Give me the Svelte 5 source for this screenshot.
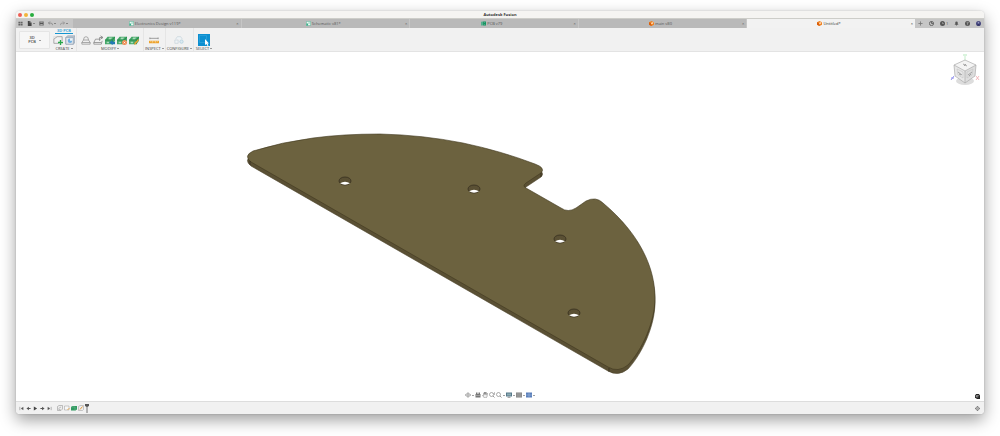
<script lang="ts">
	interface Tab {
		title: string;
		icon: string;
	}
	interface Tool {
		icon: string;
		label: string;
		menu?: boolean;
		count?: number;
	}
	interface Group {
		name: string;
		tools: Tool[];
	}

	const tabs: Tab[] = [
		{ title: 'Electronics Design v119*', icon: 'design' },
		{ title: 'Schematic v81*', icon: 'schematic' },
		{ title: 'PCB v79', icon: 'board' },
		{ title: 'main v80', icon: 'part' },
		{ title: 'Untitled*', icon: 'part' }
	];
	let active = $state(4);

	const fileTools: Tool[] = [
		{ icon: 'panel', label: 'Show data panel' },
		{ icon: 'file', label: 'File', menu: true },
		{ icon: 'save', label: 'Save' },
		{ icon: 'undo', label: 'Undo', menu: true },
		{ icon: 'redo', label: 'Redo', menu: true }
	];

	const accountTools: Tool[] = [
		{ icon: 'plus', label: 'New design' },
		{ icon: 'refresh', label: 'Extensions' },
		{ icon: 'clock', label: 'Job status', count: 1 },
		{ icon: 'bell', label: 'Notifications' },
		{ icon: 'help', label: 'Help' },
		{ icon: 'user', label: 'My profile' }
	];

	const groups: Group[] = [
		{
			name: 'CREATE',
			tools: [
				{ icon: 'sketch', label: 'Create sketch' },
				{ icon: 'derive', label: 'Board from sketch' }
			]
		},
		{
			name: 'MODIFY',
			tools: [
				{ icon: 'press', label: 'Press pull' },
				{ icon: 'move', label: 'Move' },
				{ icon: 'pcbPush', label: 'Push to PCB' },
				{ icon: 'pcbOff', label: 'Detach component' },
				{ icon: 'pcbEdit', label: 'Edit component' }
			]
		},
		{ name: 'INSPECT', tools: [{ icon: 'measure', label: 'Measure' }] },
		{ name: 'CONFIGURE', tools: [{ icon: 'configure', label: 'Configure' }] },
		{ name: 'SELECT', tools: [{ icon: 'select', label: 'Select' }] }
	];

	const navTools: Tool[] = [
		{ icon: 'orbit', label: 'Orbit', menu: true },
		{ icon: 'look', label: 'Look at' },
		{ icon: 'pan', label: 'Pan' },
		{ icon: 'zoom', label: 'Zoom' },
		{ icon: 'fit', label: 'Fit', menu: true },
		{ icon: 'display', label: 'Display settings', menu: true },
		{ icon: 'grid', label: 'Grid and snaps', menu: true },
		{ icon: 'views', label: 'Viewports', menu: true }
	];

	const playback: Tool[] = [
		{ icon: 'first', label: 'Go to beginning' },
		{ icon: 'prev', label: 'Step back' },
		{ icon: 'play', label: 'Play' },
		{ icon: 'next', label: 'Step forward' },
		{ icon: 'last', label: 'Go to end' }
	];

	const features: Tool[] = [
		{ icon: 'link', label: 'Link' },
		{ icon: 'sketchStep', label: 'Sketch' },
		{ icon: 'boardStep', label: 'Board' },
		{ icon: 'editStep', label: 'Edit' }
	];

	// the top face of the board; the underside is the same outline, lowered
	const outline =
		'M253 151 Q282 142 313 138 Q343 134 380 134 Q423 135 463 143 Q501 151 535 164 Q546 168 541 173 L526 183 Q522 186 526 188 L561 208 Q568 213 576 208 L586 201 Q596 196 603 203 C640 234 655 268 655 298 C655 322 642 350 628 365 Q618 373 608 367 L251 162 Q243 156 253 151 Z';
	const holes = [
		[345, 181],
		[474, 189],
		[560, 239],
		[574, 313]
	];
</script>

{#snippet glyph(name: string)}
	<svg class="glyph" viewBox="0 0 12 12" aria-hidden="true">
		{#if name === 'design' || name === 'schematic'}
			<path d="M1 1h10v10H1z" fill="#eefaf5" stroke="#36ad88" />
			<path d="M1 6h4v5H1z" fill="#36ad88" />
			<path d="M5 3h4v3H5" fill="none" stroke="#6cc7aa" />
		{:else if name === 'board'}
			<path d="M0 2l5-1v10H0z" fill="#54af8d" />
			<path d="M5 1h7v10H5z" fill="#149260" />
			<path d="M7 3h3v2H7zM7 7h3v2H7z" fill="#53b58f" />
		{:else if name === 'part'}
			<path d="M6 0l6 3v6l-6 3-6-3V3z" fill="#f08221" />
			<path d="M0 3l6 3v6l-6-3z" fill="#d95e0b" />
			<path d="M5 4l6-2-2 5-4 1z" fill="#ffd0a3" />
		{:else if name === 'panel'}
			<path d="M1 2h4v4H1zM6 2h5v4H6zM1 7h4v4H1zM6 7h5v4H6z" fill="#626262" />
		{:else if name === 'file'}
			<path d="M2 0h5l4 4v8H2z" fill="#444" />
			<path d="M7 0v4h4" fill="none" stroke="#bbb" />
		{:else if name === 'save'}
			<path d="M1 1h10v10H1z" fill="#555" />
			<path d="M3 1h6v3H3zM3 7h6v4H3z" fill="#aaa" />
		{:else if name === 'undo'}
			<path d="M5 1L1 5l4 3M1 5h6q4 0 4 5" fill="none" stroke="#777" stroke-width="1.5" />
		{:else if name === 'redo'}
			<path d="M7 1l4 4-4 3M11 5H5q-4 0-4 5" fill="none" stroke="#888" stroke-width="1.5" />
		{:else if name === 'plus'}
			<path d="M6 1v10M1 6h10" stroke="#777" stroke-width="2" />
		{:else if name === 'refresh'}
			<circle cx="6" cy="6" r="5" fill="none" stroke="#555" stroke-width="2" />
			<path d="M6 1v5h5" fill="none" stroke="#555" stroke-width="2" />
		{:else if name === 'clock'}
			<circle cx="6" cy="6" r="6" fill="#555" />
			<path d="M6 3v3h3" fill="none" stroke="#bbb" stroke-width="1.5" />
		{:else if name === 'bell'}
			<path d="M1 9l2-2V4q0-3 3-3t3 3v3l2 2zM5 9h2v2H5z" fill="#555" />
		{:else if name === 'help'}
			<circle cx="6" cy="6" r="6" fill="#555" />
			<path d="M4 4q2-2 4 0 0 1-2 2v1M6 8v2" fill="none" stroke="#ddd" stroke-width="1.3" />
		{:else if name === 'user'}
			<circle cx="6" cy="6" r="6" fill="#45467d" />
			<circle cx="6" cy="4" r="2" fill="#9698bd" />
			<path d="M2 11q4-6 8 0" fill="#292959" />
		{:else if name === 'sketch'}
			<path d="M1 10V5l4-3h6v5M1 10h6" fill="none" stroke="#888" stroke-width=".8" />
			<path d="M1 5V2h4" fill="none" stroke="#aaa" stroke-width=".6" stroke-dasharray="1 1" />
			<path d="M9 6v6M6 9h6" stroke="#28a64a" stroke-width="1.6" />
		{:else if name === 'derive'}
			<path d="M1 3l2-2h9v8l-2 2H1z" fill="#bdc8d3" stroke="#899aac" stroke-width=".7" />
			<path d="M1 3h9v8H1z" fill="#e1e7ec" stroke="#899aac" stroke-width=".7" />
			<circle cx="6" cy="7" r="2.7" fill="#6faee0" />
			<path d="M6 7V4a3 3 0 0 1 3 3z" fill="#eaf4fa" />
		{:else if name === 'press'}
			<path d="M3 6L1 9v2h10V9L9 6z" fill="#eee" stroke="#888" stroke-width=".8" />
			<path d="M1 9h10M3 6q0-4 3-4t3 4" fill="none" stroke="#888" stroke-width=".8" />
		{:else if name === 'move'}
			<path d="M3 5L1 9v2h9l1-4M1 9h9M3 5h5" fill="none" stroke="#777" stroke-width=".8" />
			<path d="M8 7V3h3M9 1l3 2-3 2" fill="none" stroke="#666" stroke-width=".8" />
		{:else if name === 'pcbPush' || name === 'pcbOff' || name === 'pcbEdit'}
			<path d="M0 6l3-4h9v5l-3 4H0z" fill="#45a768" />
			<path d="M0 6h9l3-4M9 6v5" fill="none" stroke="#187f43" stroke-width=".8" />
			<path d="M4 5l1-2h4L7 5z" fill="#a9dcb9" />
			<path d="M2 8h3v2H2z" fill="#a9dcb9" />
			{#if name === 'pcbPush'}
				<path d="M5 9l4-3v2h3v3H9v1z" fill="#217bb5" />
			{:else if name === 'pcbOff'}
				<circle cx="9" cy="9" r="3" fill="#ef8e55" />
				<path d="M8 8l2 2M10 8l-2 2" stroke="#fff" stroke-width=".8" />
			{:else}
				<path d="M6 12l1-3 4-4 1 1-4 5z" fill="#eda031" />
			{/if}
		{:else if name === 'measure'}
			<path d="M0 7h12v3H0z" fill="#eda32d" />
			<path d="M2 7v1M4 7v2M6 7v1M8 7v2M10 7v1" stroke="#fff" stroke-width=".6" />
			<path d="M1 4h10M1 3v2M11 3v2" stroke="#777" stroke-width=".8" />
		{:else if name === 'configure'}
			<path d="M2 5l2-3h4l2 3M1 6h4v4H1z" fill="#eef3f6" stroke="#c5d2da" stroke-width=".8" />
			<circle cx="9" cy="8" r="2" fill="#dceaf2" stroke="#b5d2e0" />
		{:else if name === 'select'}
			<path d="M0 0h12v12H0z" fill="#0c8fd0" />
			<path d="M1.500 1.500h7v7h-7z" fill="none" stroke="#3daae0" stroke-width=".5" />
			<path d="M7 5v6l1.500-1 1 2 1-.5-1-2H11z" fill="#fff" />
		{:else if name === 'orbit'}
			<path d="M6 0v12M0 6h12" stroke="#888" stroke-width="1.200" />
			<ellipse cx="6" cy="6" rx="5" ry="3" fill="none" stroke="#888" />
		{:else if name === 'look'}
			<path d="M1 4h10v7H1zM2 1h3v3H2zM7 1h3v3H7z" fill="#777" />
			<path d="M2 7h8" stroke="#ccc" />
		{:else if name === 'pan'}
			<path d="M3 7V3h1V1h1v4-5h2v5-4h2v4l1-2h1l-1 6-2 3H5L1 7z" fill="#eee" stroke="#777" />
		{:else if name === 'zoom' || name === 'fit'}
			<circle cx="5" cy="5" r="4" fill="none" stroke="#777" stroke-width="1.200" />
			<path d="M8 8l3 3" stroke="#777" stroke-width="1.500" />
			{#if name === 'zoom'}<path d="M11 1v5M9 3l2-2" fill="none" stroke="#777" />{/if}
		{:else if name === 'display'}
			<path d="M0 1h12v8H0z" fill="#56788a" />
			<path d="M2 3h8v4H2z" fill="#8cabb2" />
			<path d="M6 9v2M3 11h6" stroke="#666" />
		{:else if name === 'grid'}
			<path d="M0 1h12v10H0z" fill="#808080" />
			<path d="M4 1v10M8 1v10M0 4h12M0 8h12" stroke="#bbb" stroke-width=".8" />
		{:else if name === 'views'}
			<path d="M0 1h12v10H0z" fill="#5a7fba" />
			<path d="M6 1v10M0 6h12" stroke="#a9c0e3" />
		{:else if name === 'first'}
			<path d="M2 2v8M10 3L5 6l5 3z" fill="#555" stroke="#555" />
		{:else if name === 'prev'}
			<path d="M7 2v8L1 6zM7 5h4v2H7z" fill="#555" />
		{:else if name === 'play'}
			<path d="M2 1l8 5-8 5z" fill="#444" />
		{:else if name === 'next'}
			<path d="M5 2v8l6-4zM1 5h4v2H1z" fill="#555" />
		{:else if name === 'last'}
			<path d="M10 2v8M2 3l5 3-5 3z" fill="#555" stroke="#555" />
		{:else if name === 'link'}
			<path d="M1 3l3-2h7v7l-3 3H1z" fill="#eee" stroke="#888" />
			<path d="M3 7l5-3M3 9h4" stroke="#888" />
		{:else if name === 'sketchStep'}
			<path d="M1 2h9v8H1z" fill="#f7f7f7" stroke="#999" />
			<path d="M7 10l4-4" stroke="#e9ad55" stroke-width="2" />
		{:else if name === 'boardStep'}
			<path d="M0 4l3-2h9v7l-3 2H0z" fill="#319a61" />
			<path d="M0 4h8v7" fill="none" stroke="#78bd94" />
		{:else if name === 'editStep'}
			<path d="M1 3l3-2h7v8l-2 2H1z" fill="#eee" stroke="#999" />
			<path d="M4 9l5-6" stroke="#e69c3d" stroke-width="2" />
		{:else if name === 'gear'}
			<circle cx="6" cy="6" r="4" fill="#ddd" stroke="#777" stroke-width="2" />
			<path d="M6 0v3M6 9v3M0 6h3M9 6h3" stroke="#777" stroke-width="2" />
			<circle cx="6" cy="6" r="1" fill="#777" />
		{:else if name === 'assistant'}
			<path d="M3 0h6l3 3v9H5L0 9V3z" fill="#222" />
			<path d="M3 4h6M3 4v3h5" fill="none" stroke="#ddd" stroke-width="1.500" />
		{/if}
	</svg>
{/snippet}

{#snippet toolButton(tool: Tool)}
	<button class="tool" aria-label={tool.label} title={tool.label}>
		{@render glyph(tool.icon)}
		{#if tool.count}<span class="count">{tool.count}</span>{/if}
		{#if tool.menu}<span class="caret"></span>{/if}
	</button>
{/snippet}

<main class="desktop">
	<div class="window">
		<header class="titlebar">
			<div class="lights">
				<button class="close" aria-label="Close window"></button>
				<button class="minimize" aria-label="Minimize window"></button>
				<button class="maximize" aria-label="Maximize window"></button>
			</div>
			<h1>Autodesk Fusion</h1>
		</header>

		<div class="tabstrip">
			<div class="file-tools">
				{#each fileTools as tool (tool.icon)}
					{@render toolButton(tool)}
				{/each}
			</div>
			<div class="tabs">
				{#each tabs as tab, i (tab.title)}
					<div class="tab" class:active={active === i}>
						<button class="tab-title" onclick={() => (active = i)}>
							{@render glyph(tab.icon)}{tab.title}
						</button>
						<button class="tab-close" aria-label="Close {tab.title}">×</button>
					</div>
				{/each}
			</div>
			<div class="account-tools">
				{#each accountTools as tool (tool.icon)}
					{@render toolButton(tool)}
				{/each}
			</div>
		</div>

		<div class="ribbon">
			<button class="workspace">
				<span>3D<br />PCB</span>
				<span class="caret"></span>
			</button>
			{#each groups as group, i (group.name)}
				<section class="group" class:wide={group.tools.length > 2}>
					<div class="mode" class:current={i === 0}>{i === 0 ? '3D PCB' : ''}</div>
					<div class="group-tools">
						{#each group.tools as tool (tool.icon)}
							{@render toolButton(tool)}
						{/each}
					</div>
					<button class="group-name">{group.name}<span class="caret"></span></button>
				</section>
			{/each}
		</div>

		<div class="viewport">
			<svg class="model" viewBox="16 52 968 349" role="img" aria-label="Board model">
				<path
					d={outline}
					transform="translate(0 4)"
					fill="#5a5034"
					stroke="#4a4129"
					stroke-width=".6"
				/>
				<path d={outline} fill="#6c623f" stroke="#40381f" stroke-width=".6" />
				<path d="M250 161v4M609 368v4M541 173v4" stroke="#302a1b" stroke-width=".7" />
				{#each holes as [x, y] (x)}
					<g transform="translate({x} {y})">
						<ellipse rx="6" ry="4" fill="#5a5034" stroke="#302a1b" stroke-width=".7" />
						<path d="M-5 2.300Q0-.8 5 2.300Q0 5 -5 2.300Z" fill="#fff" />
					</g>
				{/each}
			</svg>

			<svg class="viewcube" viewBox="0 0 30 34" role="img" aria-label="View cube">
				<path d="M15 8V2" stroke="#9be0a5" stroke-width=".6" />
				<path d="M13 1h4" stroke="#b5e9bd" />
				<path d="M4 24H1m3-2l-3 4" fill="none" stroke="#8080ea" stroke-width=".8" />
				<path d="M26 22l3 4m0-4l-3 4" stroke="#f0a9ae" stroke-width=".8" />
				<ellipse cx="15" cy="27" rx="9" ry="4" fill="#ddd" />
				<path d="M15 6l11 5-11 6-11-6z" fill="#f4f4f4" />
				<path d="M4 11l11 6v12L5 22z" fill="#e7e7e7" />
				<path d="M26 11l-11 6v12l10-7z" fill="#dedede" />
				<path
					d="M15 6l11 5-1 11-10 7-10-7-1-11zM4 11l11 6 11-6M15 17v12"
					fill="none"
					stroke="#aaa"
					stroke-width=".7"
				/>
				<path d="M7 15l6 3v6l-5-3zM23 15l-6 3v6l5-3z" fill="none" stroke="#c5c5c5" stroke-width=".6" />
				<path
					d="M13 10l4 2M14 12l2-2M8 18l4 3M9 20l2 1M18 21l4-3M19 22l2-2"
					stroke="#888"
					stroke-width=".7"
				/>
			</svg>

			<nav class="navbar" aria-label="Navigation">
				{#each navTools as tool (tool.icon)}
					{@render toolButton(tool)}
				{/each}
			</nav>
			<button class="assistant tool" aria-label="Assistant">{@render glyph('assistant')}</button>
		</div>

		<footer class="timeline">
			<div class="playback">
				{#each playback as tool (tool.icon)}
					{@render toolButton(tool)}
				{/each}
			</div>
			<div class="features">
				{#each features as tool (tool.icon)}
					{@render toolButton(tool)}
				{/each}
				<svg class="marker" viewBox="0 0 4 9" aria-hidden="true">
					<path d="M0 0h4v2L2 3 0 2z" fill="#555" />
					<path d="M2 2v7" stroke="#555" stroke-width=".8" />
				</svg>
			</div>
			<button class="settings tool" aria-label="Timeline settings">{@render glyph('gear')}</button>
		</footer>
	</div>
</main>

<style>
	:global(body) {
		margin: 0;
		background: #fff;
	}
	.desktop {
		box-sizing: border-box;
		min-height: 100vh;
		padding: 11px 16px 22px;
		display: flex;
		font-family: 'Open Sans', sans-serif;
		font-size: 4px;
		line-height: 5px;
		color: #444;
	}
	.window {
		flex: 1;
		min-width: 0;
		display: flex;
		flex-direction: column;
		overflow: hidden;
		border-radius: 4px;
		background: #fff;
		box-shadow:
			0 6px 16px rgba(0, 0, 0, 0.38),
			0 0 2px rgba(0, 0, 0, 0.2);
	}
	button {
		margin: 0;
		padding: 0;
		border: 0;
		background: none;
		color: inherit;
		font: inherit;
	}
	.titlebar {
		display: grid;
		grid-template-columns: 1fr auto 1fr;
		align-items: center;
		height: 8px;
		background: #f5f4f2;
		border-bottom: 1px solid #cdcdc9;
		box-sizing: border-box;
	}
	.titlebar h1 {
		margin: 0;
		font-size: 4px;
		font-weight: 700;
		color: #333;
	}
	.lights {
		display: flex;
		gap: 2px;
		padding-left: 2px;
	}
	.lights button {
		width: 4px;
		height: 4px;
		border-radius: 50%;
	}
	.close {
		background: #ee5e56;
	}
	.minimize {
		background: #f2b43c;
	}
	.maximize {
		background: #27ad3e;
	}
	.tabstrip {
		display: flex;
		height: 9px;
		background: #c6c6c6;
	}
	.file-tools,
	.account-tools,
	.group-tools,
	.playback,
	.features,
	.navbar {
		display: flex;
		align-items: center;
	}
	.file-tools {
		width: 55px;
		gap: 4px;
		padding-left: 2px;
	}
	.account-tools {
		width: 66px;
		gap: 6px;
		padding-left: 3px;
	}
	.tool {
		display: flex;
		align-items: center;
		gap: 1px;
	}
	.glyph {
		display: block;
		flex: none;
		width: 5px;
		height: 5px;
	}
	.caret {
		display: inline-block;
		border: 1px solid transparent;
		border-top-color: #444;
		border-bottom: 0;
	}
	.tabs {
		flex: 1;
		display: flex;
		gap: 1px;
	}
	.tab {
		flex: 1;
		display: flex;
		align-items: center;
		padding-right: 2px;
		background: #b9b9b9;
		color: #555;
	}
	.tab.active {
		background: #f2f2f2;
		color: #333;
	}
	.tab-title {
		flex: 1;
		display: flex;
		align-items: center;
		justify-content: center;
		gap: 1px;
	}
	.ribbon {
		display: flex;
		align-items: flex-start;
		height: 24px;
		background: #f1f1f1;
		border-bottom: 1px solid #e3e3e3;
		box-sizing: border-box;
	}
	.workspace {
		display: flex;
		align-items: center;
		justify-content: center;
		gap: 3px;
		width: 31px;
		height: 18px;
		margin: 3px 2px 0 3px;
		border: 1px solid #e5e5e5;
		border-radius: 1px;
		box-sizing: border-box;
		background: #f6f6f6;
		font-weight: 600;
		line-height: 4px;
	}
	.group {
		display: flex;
		flex-direction: column;
		align-items: center;
		padding: 0 1px;
		border-right: 1px solid #e5e5e5;
	}
	.group.wide {
		padding: 0 4px;
	}
	.group:last-child {
		border-right: 0;
	}
	.mode {
		height: 6px;
		width: 18px;
		box-sizing: border-box;
		text-align: center;
		border-bottom: 1px solid transparent;
	}
	.mode.current {
		border-color: #1495d1;
		color: #1495d1;
		font-weight: 600;
	}
	.group-tools {
		gap: 2px;
		height: 12px;
	}
	.group-tools .glyph {
		width: 10px;
		height: 10px;
	}
	.group:last-child .glyph {
		width: 12px;
		height: 12px;
	}
	.group-name {
		display: flex;
		align-items: center;
		gap: 1px;
	}
	.viewport {
		flex: 1;
		position: relative;
		background: #fff;
	}
	.model {
		display: block;
		width: 100%;
	}
	.viewcube {
		position: absolute;
		top: 2px;
		right: 4px;
		width: 30px;
		height: 34px;
	}
	.navbar {
		position: absolute;
		bottom: 3px;
		left: 50%;
		transform: translateX(-50%);
		gap: 1px;
	}
	.navbar .glyph {
		width: 6px;
		height: 6px;
	}
	.assistant {
		position: absolute;
		right: 4px;
		bottom: 2px;
	}
	.timeline {
		display: flex;
		align-items: center;
		height: 13px;
		padding: 0 4px 0 3px;
		background: #f1f1f1;
		border-top: 1px solid #ddd;
		box-sizing: border-box;
	}
	.playback {
		gap: 2px;
	}
	.features {
		gap: 1px;
		margin-left: 5px;
	}
	.features .glyph {
		width: 6px;
		height: 6px;
	}
	.marker {
		width: 4px;
		height: 9px;
	}
	.settings {
		margin-left: auto;
	}
</style>
